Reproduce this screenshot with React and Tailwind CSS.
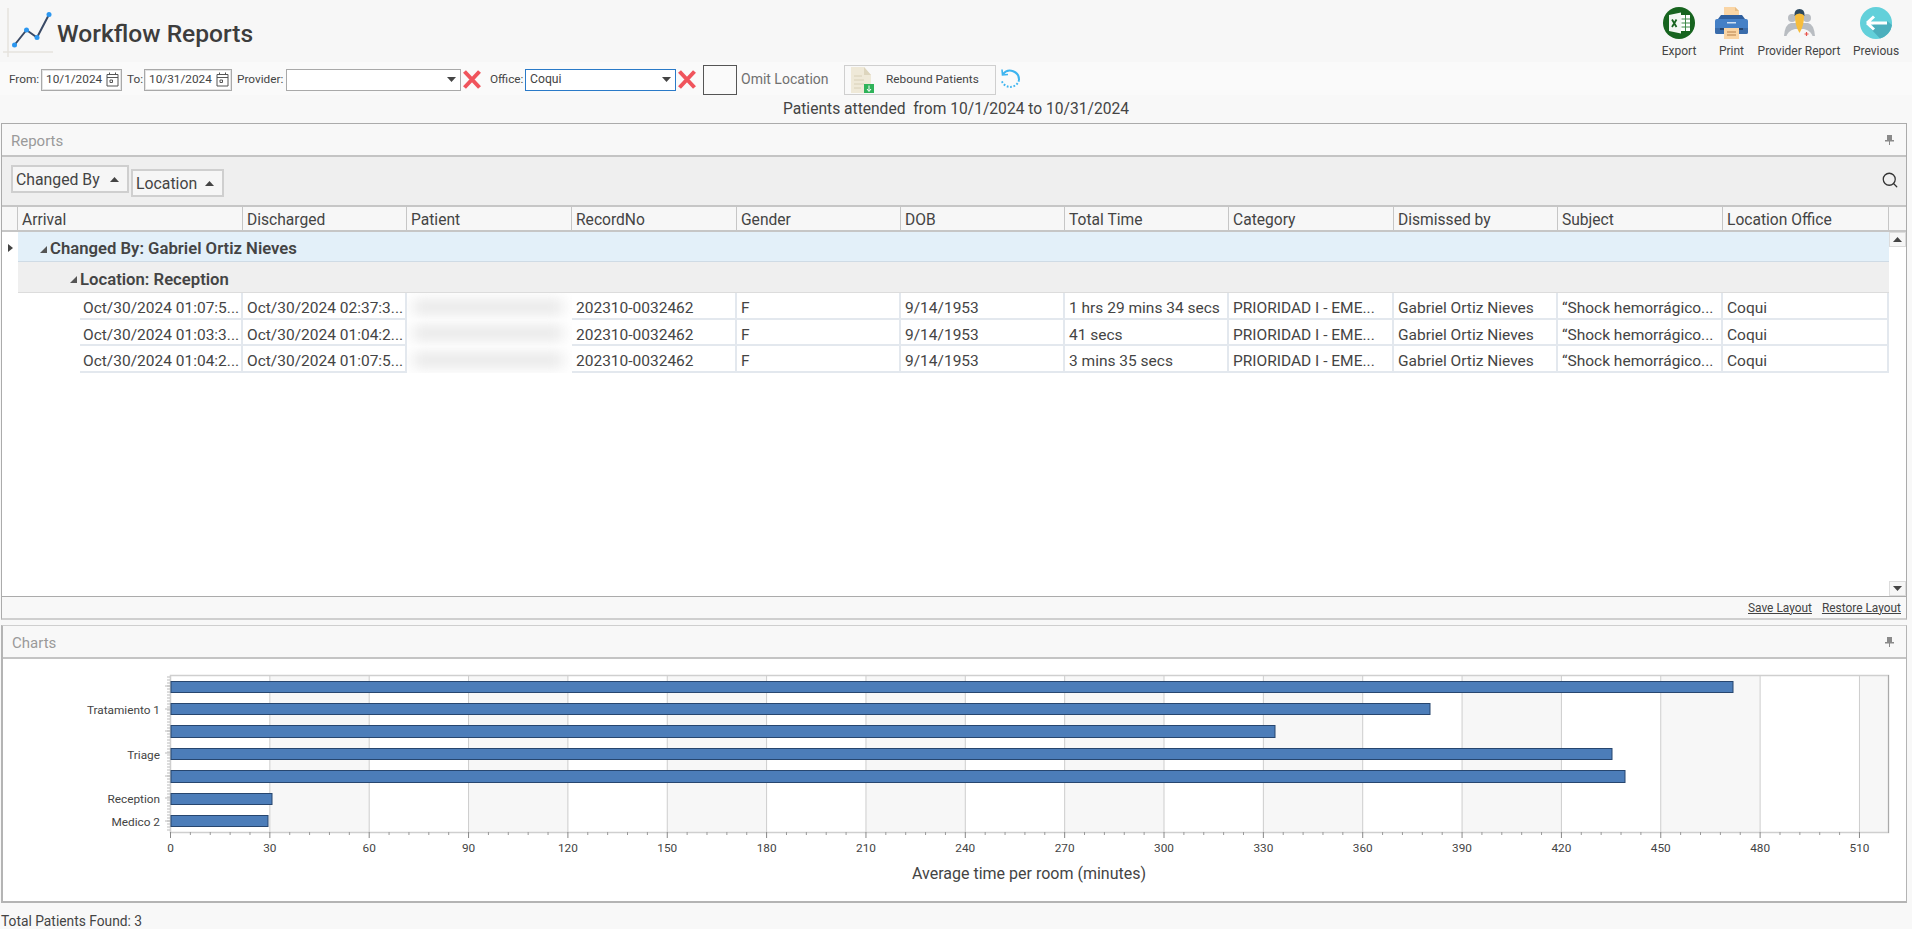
import React from "react";
import { Search } from "lucide-react";

const columns = [
  { name: "Arrival", w: "w-[225px]" },
  { name: "Discharged", w: "w-[164px]" },
  { name: "Patient", w: "w-[165px]" },
  { name: "RecordNo", w: "w-[165px]" },
  { name: "Gender", w: "w-[164px]" },
  { name: "DOB", w: "w-[164px]" },
  { name: "Total Time", w: "w-[164px]" },
  { name: "Category", w: "w-[165px]" },
  { name: "Dismissed by", w: "w-[164px]" },
  { name: "Subject", w: "w-[165px]" },
  { name: "Location Office", w: "w-[166px]" },
];

const rows = [
  { arrival: "Oct/30/2024 01:07:5...", discharged: "Oct/30/2024 02:37:3...", total: "1 hrs 29 mins 34 secs", h: "h-[27px]" },
  { arrival: "Oct/30/2024 01:03:3...", discharged: "Oct/30/2024 01:04:2...", total: "41 secs", h: "h-[26px]" },
  { arrival: "Oct/30/2024 01:04:2...", discharged: "Oct/30/2024 01:07:5...", total: "3 mins 35 secs", h: "h-[27px]" },
];

const bars = [
  { y: 681, h: 11, end: 1733 },
  { y: 703, h: 11, end: 1430 },
  { y: 725, h: 12, end: 1275 },
  { y: 748, h: 11, end: 1612 },
  { y: 770, h: 12, end: 1625 },
  { y: 793, h: 11, end: 272 },
  { y: 815, h: 11, end: 268 },
];

const xLabels = [0, 30, 60, 90, 120, 150, 180, 210, 240, 270, 300, 330, 360, 390, 420, 450, 480, 510];
const yLabels = [
  { t: "Tratamiento 1", y: 710 },
  { t: "Triage", y: 755 },
  { t: "Reception", y: 799 },
  { t: "Medico 2", y: 822 },
];
const xPos = (v) => 170.5 + v * 3.3117;

function RedX() {
  return (
    <svg width="20" height="21" viewBox="0 0 20 21" className="shrink-0">
      <path d="M2.5 2.5 L17.5 18.5 M17.5 2.5 L2.5 18.5" stroke="#f0545c" strokeWidth="4" />
    </svg>
  );
}

function Arrow({ up }) {
  return (
    <svg width="9" height="5" viewBox="0 0 9 5" className="shrink-0">
      <path d={up ? "M4.5 0 L9 5 L0 5 Z" : "M0 0 L9 0 L4.5 5 Z"} fill="#444" />
    </svg>
  );
}

function CalendarIcon() {
  return (
    <svg width="13" height="15" viewBox="0 0 13 15" className="shrink-0">
      <path d="M1 2.5 H12 V14 H1 Z M1 5.5 H12 M3.5 0.5 V3 M9.5 0.5 V3 M4 8 H6.5 V10.5 H4 Z" fill="none" stroke="#555" />
    </svg>
  );
}

function Pin() {
  return (
    <svg width="9" height="10" viewBox="0 0 9 10">
      <path d="M2 0 H7 V5 H9 V6.5 H5 V10 H4 V6.5 H0 V5 H2 Z" fill="#8a8a8a" />
    </svg>
  );
}

function ExportIcon() {
  return (
    <svg width="32" height="32" viewBox="0 0 32 32">
      <circle cx="16" cy="16" r="16" fill="#17641f" />
      <path d="M6 8 L18 5.5 V26.5 L6 24 Z" fill="#f2f7f2" />
      <path d="M9 12.5 L13.5 20 M13.5 12.5 L9 20" stroke="#17641f" strokeWidth="1.8" />
      <path d="M18 8 H27 V24 H18 Z" fill="#fff" />
      <path d="M18.5 12 H27 M18.5 16 H27 M18.5 20 H27 M22.5 8 V24" stroke="#3f8a49" strokeWidth="1" />
    </svg>
  );
}

function PrintIcon() {
  return (
    <svg width="33" height="32" viewBox="0 0 33 32">
      <path d="M9 0 H20 L24 4 V10 H9 Z" fill="#fad5a5" />
      <path d="M20 0 L24 4 H20 Z" fill="#e8bd85" />
      <path d="M6 8 H27 L30 12 H3 Z" fill="#2f5f9e" />
      <path d="M2 12 H31 Q33 12 33 14 V25 Q33 27 31 27 H2 Q0 27 0 25 V14 Q0 12 2 12 Z" fill="#4580c6" />
      <path d="M0 21 H33 V25 Q33 27 31 27 H2 Q0 27 0 25 Z" fill="#3a6cab" />
      <path d="M5 21 H28 V23 H5 Z" fill="#25456f" />
      <path d="M12 15 H21 V16.5 H12 Z" fill="#cfe0f3" />
      <path d="M9 21 H24 V32 H9 Z" fill="#fad5a5" />
      <path d="M12 25 H21 M12 28 H21" stroke="#b5804a" strokeWidth="1.2" />
    </svg>
  );
}

function ProviderIcon() {
  return (
    <svg width="33" height="32" viewBox="0 0 33 32">
      <circle cx="9" cy="11" r="4" fill="#b9bdc2" />
      <circle cx="24" cy="11" r="4" fill="#b9bdc2" />
      <path d="M1 29 Q2 17 8 16 H25 Q31 17 32 29 Z" fill="#b9bdc2" />
      <path d="M3 31 Q4 24 12 22 H21 Q29 24 30 31 Z" fill="#f6f6f6" />
      <path d="M12 9 Q12 3 16.5 3 Q21 3 21 9 Q21 19 16.5 26 Q12 19 12 9 Z" fill="#f7bd3c" />
      <path d="M11.5 9 Q11 2 16.5 2 Q22 2 21.5 9 Q20 6.5 16.5 6.5 Q13 6.5 11.5 9 Z" fill="#2e4a60" />
      <path d="M21.5 27 H25.5 M23.5 25 V29" stroke="#e8554e" strokeWidth="1.2" />
    </svg>
  );
}

function PreviousIcon() {
  return (
    <svg width="32" height="32" viewBox="0 0 32 32">
      <circle cx="16" cy="16" r="16" fill="#62d0da" />
      <path d="M27 14 L32 18 A16 16 0 0 1 20 31.5 L10 21 L14 17 H27 Z" fill="#4cafbd" />
      <path d="M7 16 L14 9.5 M7 16 L14 22.5 M7 16 H27" stroke="#fff" strokeWidth="3" fill="none" />
    </svg>
  );
}

function HeaderAction({ icon, label, w }) {
  return (
    <div className={`flex flex-col items-center pt-[7px] ${w}`}>
      <div className="h-[32px]">{icon}</div>
      <span className="mt-[4px] text-[12px] leading-[17px] whitespace-nowrap">{label}</span>
    </div>
  );
}

function DateField({ value, w }) {
  return (
    <div className={`flex h-[22px] items-center justify-between border border-[#a9a9a9] bg-white pl-[4px] pr-[2px] shadow-[inset_0_0_0_1px_#e4e4e4] ${w}`}>
      <span className="text-[11.8px] whitespace-nowrap">{value}</span>
      <CalendarIcon />
    </div>
  );
}

function GroupChip({ label, cls }) {
  return (
    <div className={`flex h-[28px] items-center justify-between border-2 border-[#cfcfcf] bg-[#f6f6f6] pl-[3px] pr-[5px] pt-[2px] text-[15.8px] ${cls}`}>
      <span className="whitespace-nowrap">{label}</span>
      <span className="mr-[3px] mb-[2px]"><Arrow up /></span>
    </div>
  );
}

function PanelHeader({ title }) {
  return (
    <div className="flex h-[33px] shrink-0 items-center justify-between border-b-2 border-[#c4c4c4] bg-[#f8f8f8] pl-[9px] pr-[12px]">
      <span className="pt-[4px] text-[15px] text-[#9a9a9a]">{title}</span>
      <Pin />
    </div>
  );
}

function ChartSvg() {
  const minor = [];
  for (let v = 6; v < 516; v += 6) if (v % 30 !== 0) minor.push(v);
  const yDots = [];
  for (let y = 677; y < 832; y += 3) yDots.push(y);
  return (
    <svg width="1903" height="242" viewBox="3 659 1903 242" className="block shrink-0">
      <rect x="170" y="675" width="1718" height="157" fill="#fff" />
      {xLabels.map((v, i) => {
        const x1 = xPos(v);
        const x2 = i === xLabels.length - 1 ? 1888 : xPos(xLabels[i + 1]);
        return i % 2 === 1 || v === 510 ? <rect key={v} x={x1} y="675" width={x2 - x1} height="157" fill="#f7f7f7" /> : null;
      })}
      {xLabels.slice(1).map((v) => (
        <line key={v} x1={xPos(v)} x2={xPos(v)} y1="675" y2="832" stroke="#cdcdcd" />
      ))}
      <rect x="170.5" y="675.5" width="1718" height="157" fill="none" stroke="#cfcfcf" strokeWidth="1.5" />
      <line x1="1888.5" x2="1888.5" y1="675" y2="833" stroke="#aaa" />
      {bars.map((b) => (
        <rect key={b.y} x="171" y={b.y + 0.5} width={b.end - 171} height={b.h} fill="#4c7db9" stroke="#27466f" strokeWidth="1" />
      ))}
      {minor.map((v) => (
        <line key={v} x1={xPos(v)} x2={xPos(v)} y1="832" y2="835" stroke="#999" />
      ))}
      {xLabels.map((v) => (
        <line key={v} x1={xPos(v)} x2={xPos(v)} y1="832" y2="838" stroke="#888" />
      ))}
      {yDots.map((y) => (
        <line key={y} x1="167" x2="170" y1={y} y2={y} stroke="#bbb" />
      ))}
      {[686, 709, 731, 753, 776, 798, 821].map((y) => (
        <line key={y} x1="165" x2="170" y1={y} y2={y} stroke="#bbb" />
      ))}
      {yLabels.map((l) => (
        <text key={l.t} x="160" y={l.y + 4} textAnchor="end" fontSize="11.8" fill="#444">{l.t}</text>
      ))}
      {xLabels.map((v) => (
        <text key={v} x={xPos(v)} y="852" textAnchor="middle" fontSize="11.8" fill="#444">{v}</text>
      ))}
      <text x="1029" y="879" textAnchor="middle" fontSize="16" fill="#444">Average time per room (minutes)</text>
    </svg>
  );
}

function Cell({ w, children }) {
  return (
    <div className={`flex shrink-0 items-center border-r-2 border-b-2 border-[#e3e8ee] pl-[4px] pt-[6px] leading-[17px] whitespace-nowrap ${w}`}>{children}</div>
  );
}

export default function App() {
  return (
    <div className="flex h-[929px] w-[1912px] flex-col overflow-hidden bg-[#f8f8f8] text-[#444] [font-family:Roboto,sans-serif]">
      {/* title bar */}
      <div className="flex h-[62px] shrink-0 justify-between bg-[#f7f7f7]">
        <div className="flex items-start">
          <svg width="54" height="60" viewBox="0 0 54 60" className="ml-[3px] mt-[7px] shrink-0">
            <path d="M5 1 V50 M0 45 H50" stroke="#e6e3de" strokeWidth="1.5" />
            <path d="M11.5 38 L23.5 23 L34 30.5 L46 7.5" stroke="#3a4a66" strokeWidth="2" fill="none" />
            <circle cx="11.5" cy="38" r="2.5" fill="#2c97f0" />
            <circle cx="23.5" cy="23" r="2.5" fill="#2c97f0" />
            <circle cx="34" cy="30.5" r="2.5" fill="#2c97f0" />
            <circle cx="46" cy="7.5" r="2.5" fill="#2c97f0" />
          </svg>
          <h1 className="mt-[16px] text-[24.6px] font-medium leading-[36px] whitespace-nowrap text-[#3d3d3d]">Workflow Reports</h1>
        </div>
        <div className="flex pr-[3px]">
          <HeaderAction icon={<ExportIcon />} label="Export" w="w-[58px]" />
          <HeaderAction icon={<PrintIcon />} label="Print" w="w-[47px]" />
          <HeaderAction icon={<ProviderIcon />} label="Provider Report" w="w-[88px]" />
          <HeaderAction icon={<PreviousIcon />} label="Previous" w="w-[66px]" />
        </div>
      </div>

      {/* filters */}
      <div className="flex h-[33px] shrink-0 items-center bg-[#fafafa] pl-[9px] pt-[2px] text-[11.8px]">
        <span className="w-[32px] whitespace-nowrap">From:</span>
        <DateField value="10/1/2024" w="w-[81px]" />
        <span className="ml-[5px] w-[17px] whitespace-nowrap">To:</span>
        <DateField value="10/31/2024" w="w-[88px]" />
        <span className="ml-[5px] w-[49px] whitespace-nowrap">Provider:</span>
        <div className="flex h-[22px] w-[175px] items-center justify-end border border-[#a9a9a9] bg-white pr-[4px]"><Arrow /></div>
        <span className="ml-[1px]"><RedX /></span>
        <span className="ml-[8px] w-[35px] whitespace-nowrap">Office:</span>
        <div className="flex h-[22px] w-[151px] items-center justify-between border border-[#2a7ac8] bg-white px-[4px]">
          <span className="text-[12.2px]">Coqui</span>
          <Arrow />
        </div>
        <span className="ml-[1px]"><RedX /></span>
        <div className="ml-[6px] h-[30px] w-[34px] border border-[#555] bg-[#fafafa]" />
        <span className="ml-[4px] w-[103px] text-[14px] whitespace-nowrap text-[#707070]">Omit Location</span>
        <div className="flex h-[30px] w-[152px] items-center border border-[#cfcfcf] bg-[#f9f9f9] pl-[5px]">
          <svg width="25" height="26" viewBox="0 0 25 26" className="shrink-0">
            <path d="M1 0 H14 L21 8 V26 H1 Z" fill="#efe9d8" />
            <path d="M14 0 L21 8 H14 Z" fill="#ddd5bd" />
            <path d="M4 9 H12 M4 13 H14 M4 17 H14 M4 21 H11" stroke="#d8d0b8" />
            <rect x="14" y="17" width="10" height="9" fill="#2fb35a" />
            <path d="M19 18.5 V24 M17 22 L19 24.5 L21 22" stroke="#fff" fill="none" />
          </svg>
          <span className="ml-[11px] text-[11.8px] whitespace-nowrap">Rebound Patients</span>
        </div>
        <svg width="21" height="23" viewBox="0 0 21 23" className="ml-[4px] shrink-0">
          <path d="M3 6 A9 9 0 0 1 19 12" stroke="#3db4f0" strokeWidth="2" fill="none" />
          <path d="M19 12 A9 9 0 0 1 1.5 12" stroke="#3db4f0" strokeWidth="2" strokeDasharray="1.7 1.7" fill="none" />
          <path d="M2 1.5 L2.5 7 L8 6.5" stroke="#3db4f0" strokeWidth="1.6" fill="none" />
        </svg>
      </div>

      <div className="flex h-[28px] shrink-0 items-center justify-center pt-[1px] text-[15.6px] whitespace-pre">
        Patients attended  from 10/1/2024 to 10/31/2024
      </div>

      {/* reports */}
      <div className="ml-[1px] flex h-[497px] w-[1906px] shrink-0 flex-col border border-b-2 border-[#ababab] border-b-[#cfcfcf] bg-[#f8f8f8]">
        <PanelHeader title="Reports" />
        <div className="flex h-[48px] shrink-0 items-start justify-between bg-[#efefef] pl-[9px] pr-[7px]">
          <div className="flex items-start">
            <GroupChip label="Changed By" cls="mt-[8px] w-[118px]" />
            <GroupChip label="Location" cls="ml-[2px] mt-[12px] w-[93px]" />
          </div>
          <Search size={18} strokeWidth={1.7} className="mt-[14px] text-[#333]" />
        </div>
        <div className="flex h-[27px] shrink-0 border-y-2 border-[#c6c6c6] bg-[#f7f7f7] text-[15.6px]">
          <div className="w-[16px] shrink-0 border-r border-[#c6c6c6]" />
          {columns.map((c) => (
            <div key={c.name} className={`flex shrink-0 items-center border-r border-[#c6c6c6] pl-[4px] pt-[4px] leading-[17px] ${c.w}`}>{c.name}</div>
          ))}
        </div>
        <div className="flex min-h-0 flex-1 border-b border-[#ababab] bg-white">
          <div className="flex w-[16px] shrink-0 justify-center pt-[12px]">
            <svg width="5" height="8" viewBox="0 0 5 8"><path d="M0 0 L5 4 L0 8 Z" fill="#444" /></svg>
          </div>
          <div className="w-[1871px] shrink-0">
            <div className="flex h-[30px] items-center border-b border-[#cfdbe5] bg-[#e3f0f9] pl-[22px] pt-[5px] text-[16.7px] leading-[20px] font-semibold">
              <svg width="7" height="7" viewBox="0 0 7 7" className="mr-[3px]"><path d="M7 0 V7 H0 Z" fill="#555" /></svg>
              Changed By: Gabriel Ortiz Nieves
            </div>
            <div className="flex h-[31px] items-center border-b border-[#dcdcdc] bg-[#efefef] pl-[52px] pt-[5px] text-[16.7px] leading-[20px] font-semibold">
              <svg width="7" height="7" viewBox="0 0 7 7" className="mr-[3px]"><path d="M7 0 V7 H0 Z" fill="#555" /></svg>
              Location: Reception
            </div>
            {rows.map((r) => (
              <div key={r.arrival} className={`flex text-[15.5px] ${r.h}`}>
                <div className="ml-[62px] flex w-[163px] shrink-0 items-center border-r-2 border-b-2 border-[#e3e8ee] pl-[3px] pt-[6px] leading-[17px] whitespace-nowrap">{r.arrival}</div>
                <Cell w="w-[164px]">{r.discharged}</Cell>
                <div className="flex w-[165px] shrink-0 items-center overflow-hidden bg-white pl-[6px]">
                  <div className="h-[14px] w-[150px] bg-[#e6e6e6] blur-[7px]" />
                </div>
                <Cell w="w-[165px]">202310-0032462</Cell>
                <Cell w="w-[164px]">F</Cell>
                <Cell w="w-[164px]">9/14/1953</Cell>
                <Cell w="w-[164px]">{r.total}</Cell>
                <Cell w="w-[165px]">PRIORIDAD I - EME...</Cell>
                <Cell w="w-[164px]">Gabriel Ortiz Nieves</Cell>
                <Cell w="w-[165px]">“Shock hemorrágico...</Cell>
                <Cell w="w-[166px]">Coqui</Cell>
              </div>
            ))}
          </div>
          <div className="flex w-[17px] shrink-0 flex-col justify-between">
            <div className="flex h-[15px] items-center justify-center border border-[#dcdcdc] bg-[#f6f6f6]"><Arrow up /></div>
            <div className="flex h-[15px] items-center justify-center border border-[#dcdcdc] bg-[#f6f6f6]"><Arrow /></div>
          </div>
        </div>
        <div className="flex h-[21px] shrink-0 items-center justify-end pr-[5px] pt-[2px] text-[11.9px]">
          <span className="underline">Save Layout</span>
          <span className="ml-[10px] underline">Restore Layout</span>
        </div>
      </div>

      {/* charts */}
      <div className="ml-[1px] mt-[5px] flex h-[278px] w-[1906px] shrink-0 flex-col border-2 border-t border-r border-[#b4b4b4] border-t-[#cfcfcf] bg-white">
        <PanelHeader title="Charts" />
        <ChartSvg />
      </div>

      <div className="mt-[10px] pl-[1px] text-[13.8px] leading-[16px] whitespace-nowrap">Total Patients Found: 3</div>
    </div>
  );
}
